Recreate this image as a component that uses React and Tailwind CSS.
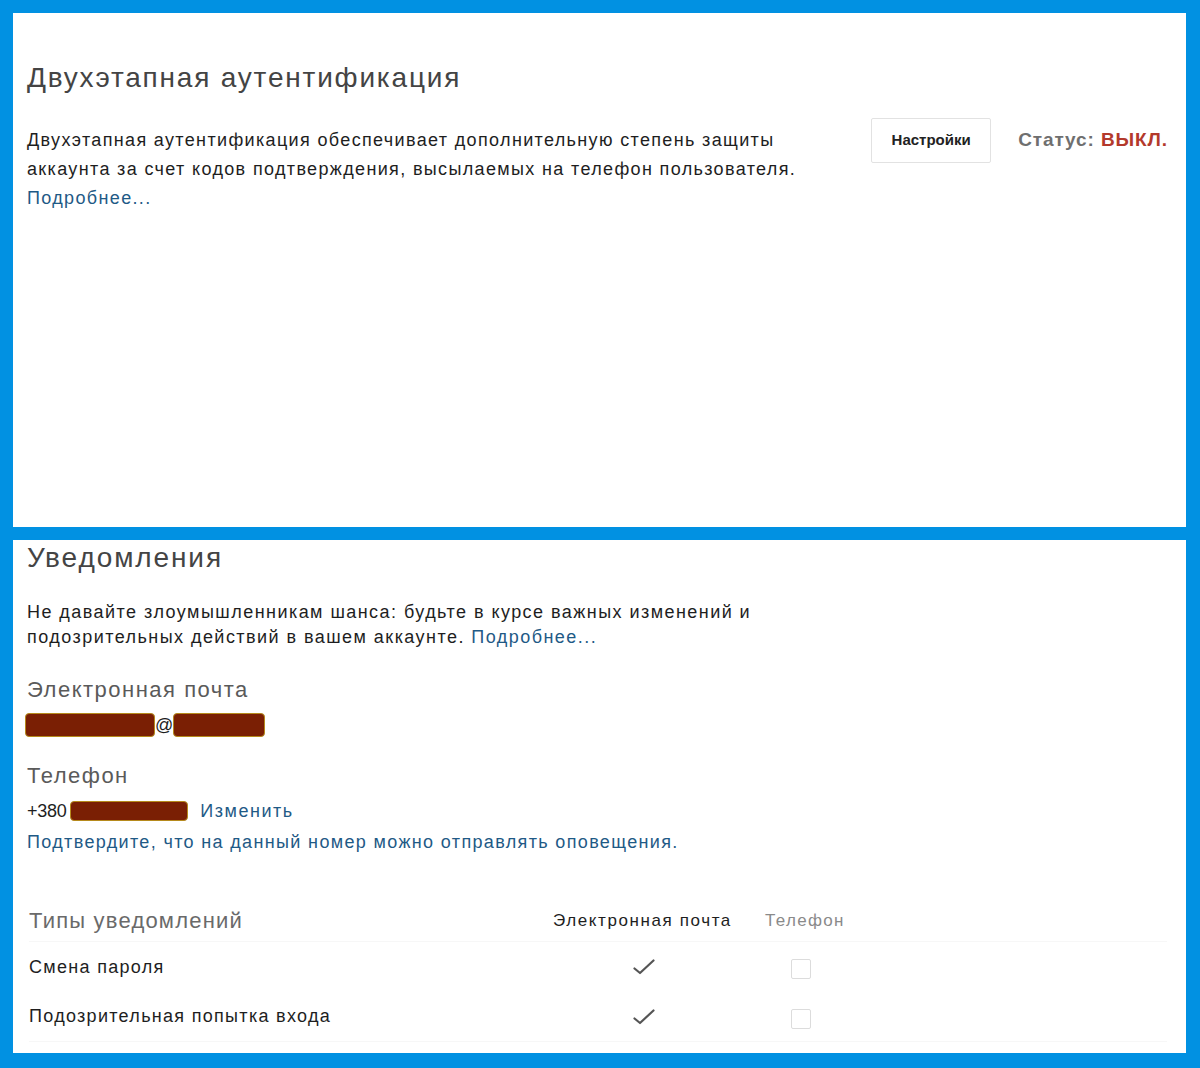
import React from "react";

const font = { fontFamily: '"Liberation Sans", Arial, sans-serif' };

function Redacted({ className }) {
  return (
    <span
      className={
        "inline-block rounded-[4px] bg-[#7a1f04] border border-[#b68a1c] align-middle " +
        className
      }
    />
  );
}

function Check() {
  return (
    <svg width="22" height="16" viewBox="0 0 22 16" fill="none">
      <path d="M1.5 9.5 L7 14 L20.5 1.5" stroke="#555" strokeWidth="2.2" strokeLinecap="round" strokeLinejoin="round" />
    </svg>
  );
}

function Box() {
  return <span className="block w-[20px] h-[20px] border border-[#dcdcdc] rounded-[2px] bg-white" />;
}

function TwoStep() {
  return (
    <section className="bg-white h-[514px] pl-[14px] pr-[19px] pt-[47px]">
      <h2 className="text-[28px] leading-[36px] text-[#444] tracking-[1.8px]">
        Двухэтапная аутентификация
      </h2>
      <div className="mt-[30px] flex items-start justify-between">
        <p className="text-[18px] leading-[29px] text-[#1e1e1e] tracking-[1.35px] w-[800px]">
          Двухэтапная аутентификация обеспечивает дополнительную степень защиты аккаунта за счет
          кодов подтверждения, высылаемых на телефон пользователя.
          <br />
          <a className="text-[#1f5a86]">Подробнее...</a>
        </p>
        <div className="flex items-center gap-[27px] -mt-[8px] -mr-[1px]">
          <button className="w-[120px] h-[45px] border border-[#e2e2e2] rounded-[2px] bg-white text-[15px] font-bold text-[#222]">
            Настройки
          </button>
          <span className="text-[19px] font-bold tracking-[0.9px] text-[#6f6f6f]">
            Статус: <span className="text-[#b3392b]">ВЫКЛ.</span>
          </span>
        </div>
      </div>
    </section>
  );
}

function Notifications() {
  const rows = ["Смена пароля", "Подозрительная попытка входа"];
  return (
    <section className="bg-white h-[513px] pl-[14px] pr-[19px]">
      <h2 className="text-[28px] leading-[36px] text-[#444] tracking-[1.9px]">Уведомления</h2>
      <div className="mt-[24px] text-[18px] leading-[25px] text-[#1e1e1e] tracking-[1.45px]">
        <div>Не давайте злоумышленникам шанса: будьте в курсе важных изменений и</div>
        <div>
          подозрительных действий в вашем аккаунте. <a className="text-[#1f5a86]">Подробнее...</a>
        </div>
      </div>
      <div className="mt-[25px] text-[22px] leading-[30px] text-[#5a5a5a] tracking-[1.5px]">
        Электронная почта
      </div>
      <div className="mt-[5px] h-[30px] flex items-center text-[18px] text-[#1e1e1e]">
        <Redacted className="w-[130px] h-[24px] -ml-[2px]" />
        <span className="leading-none">@</span>
        <Redacted className="w-[92px] h-[24px]" />
      </div>
      <div className="mt-[21px] text-[22px] leading-[30px] text-[#5a5a5a] tracking-[1.5px]">
        Телефон
      </div>
      <div className="mt-[5px] h-[30px] flex items-center text-[18px] text-[#1e1e1e]">
        <span className="tracking-[-0.3px]">+380</span>
        <Redacted className="w-[118px] h-[20px] ml-[4px]" />
        <a className="ml-[12px] text-[#1f5a86] tracking-[1.5px]">Изменить</a>
      </div>
      <a className="block mt-[1px] text-[18px] leading-[30px] text-[#1f5a86] tracking-[1.35px]">
        Подтвердите, что на данный номер можно отправлять оповещения.
      </a>
      <div className="mt-[43px] pl-[2px]">
        <div className="grid grid-cols-[524px_178px_34px_78px] items-center h-[42px] border-b border-[#f7f7f7]">
          <span className="text-[22px] text-[#6a6a6a] tracking-[1.2px]">Типы уведомлений</span>
          <span className="text-[17px] text-[#1e1e1e] tracking-[1.6px] whitespace-nowrap">
            Электронная почта
          </span>
          <span />
          <span className="text-[17px] text-[#8a8a8a] tracking-[1.3px]">Телефон</span>
        </div>
        {rows.map((r, i) => (
          <div
            key={r}
            className={
              "grid grid-cols-[524px_178px_34px_78px] items-center h-[50px] " +
              (i === rows.length - 1 ? "border-b border-[#f7f7f7]" : "")
            }
          >
            <span className="text-[18px] text-[#1e1e1e] tracking-[1.3px]">{r}</span>
            <span className="flex justify-center pl-[4px]">
              <Check />
            </span>
            <span />
            <span className="flex justify-center -ml-[6px] pt-[4px]">
              <Box />
            </span>
          </div>
        ))}
      </div>
    </section>
  );
}

export default function App() {
  return (
    <div
      style={font}
      className="w-[1200px] h-[1068px] bg-[#0191e2] pt-[13px] pl-[13px] pr-[14px] flex flex-col gap-[13px]"
    >
      <TwoStep />
      <Notifications />
    </div>
  );
}
